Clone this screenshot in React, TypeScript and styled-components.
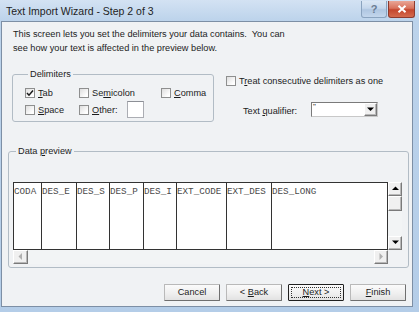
import React from "react";
import styled, { createGlobalStyle, css } from "styled-components";

const GlobalStyle = createGlobalStyle`
  html, body { margin: 0; padding: 0; background: #ffffff; }
  body { font-family: "Liberation Sans", Arial, sans-serif; }
  * { box-sizing: border-box; }
`;

const Window = styled.div`
  width: 419px;
  height: 312px;
  display: flex;
  flex-direction: column;
  background: linear-gradient(#d3e2f3, #bcd3eb 21px, #b4cde8 100%);
  overflow: hidden;
`;

const TitleBar = styled.div`
  height: 21px;
  flex: none;
  display: flex;
  align-items: flex-start;
  padding: 0 4px 0 6px;
`;

const TitleText = styled.div`
  font-size: 10.5px;
  line-height: 21px;
  padding-top: 1px;
  color: #1e1e1e;
  white-space: nowrap;
`;

const Controls = styled.div`
  margin-left: auto;
  display: flex;
  gap: 1px;
  padding-top: 1px;
`;

const CaptionButton = styled.div<{ $close?: boolean }>`
  width: ${(p) => (p.$close ? 27 : 26)}px;
  height: 17px;
  display: flex;
  align-items: center;
  justify-content: center;
  border: 1px solid ${(p) => (p.$close ? "#8d3a2e" : "#8aa3bf")};
  border-top: none;
  border-radius: 0 0 3px 3px;
  background: ${(p) =>
    p.$close
      ? "linear-gradient(#e9a696, #d9735d 45%, #c4462d 55%, #d46a4e)"
      : "linear-gradient(#dbe7f4, #c5d7ec 45%, #afc6e1 55%, #c3d6ec)"};
  font-size: 11px;
  font-weight: bold;
  color: ${(p) => (p.$close ? "#ffffff" : "#6a7c92")};
`;

const Client = styled.div`
  flex: 1;
  margin: 0 6px 5px 1px;
  border: 1px solid #7d8fa5;
  background: #f0f2f4;
  display: flex;
  flex-direction: column;
  color: #1c1c1c;
  font-size: 9.2px;
`;

const Description = styled.p`
  margin: 6px 0 0 11px;
  font-size: 9.2px;
  line-height: 13.5px;
`;

const OptionsRow = styled.div`
  display: flex;
  margin-top: 14px;
  padding-left: 10px;
`;

const Group = styled.fieldset<{ $width: number }>`
  width: ${(p) => p.$width}px;
  margin: 0;
  border: 1px solid #b2bcc5;
  border-radius: 3px;
  min-width: 0;
`;

const DelimGroup = styled(Group)`
  padding: 0 0 3px 12px;
`;

const PreviewGroup = styled(Group)`
  margin: 24px 0 0 6px;
  padding: 0 0 3px 4px;
`;

const Legend = styled.legend`
  font-size: 9.2px;
  line-height: 11px;
  padding: 0 2px;
  margin-left: 3px;
`;

const DelimGrid = styled.div`
  display: grid;
  grid-template-columns: 54px 82px auto;
  grid-template-rows: 17px 17px;
  margin-top: 4px;
`;

const CheckItem = styled.label`
  display: flex;
  align-items: center;
  gap: 3px;
  font-size: 9.2px;
  white-space: nowrap;
`;

const Box = styled.span`
  width: 10px;
  height: 10px;
  flex: none;
  border: 1px solid #8e8f8f;
  background: linear-gradient(135deg, #dedede, #ffffff 80%);
  display: flex;
  align-items: center;
  justify-content: center;
`;

const U = styled.span`
  text-decoration: underline;
`;

const OtherBox = styled.span`
  width: 17px;
  height: 17px;
  margin-left: 6px;
  background: #ffffff;
  border: 1px solid #abadb3;
  border-top-color: #8c8f96;
`;

const RightColumn = styled.div`
  margin-left: 12px;
  padding-top: 6.5px;
  display: flex;
  flex-direction: column;
`;

const QualifierRow = styled.div`
  display: flex;
  align-items: center;
  margin-top: 16px;
  padding-left: 17px;
`;

const QualifierLabel = styled.span`
  width: 68px;
  padding-top: 3px;
  font-size: 9.2px;
`;

const Select = styled.div`
  width: 67px;
  height: 15px;
  display: flex;
  background: #ffffff;
  border: 1px solid #7a7a7a;
  border-right-color: #c8c8c8;
  border-bottom-color: #c8c8c8;
`;

const SelectValue = styled.span`
  flex: 1;
  font-size: 8px;
  line-height: 8px;
  padding-left: 1px;
`;

const ArrowButton = styled.span<{ $disabled?: boolean; $w?: number; $h?: number }>`
  width: ${(p) => p.$w ?? 13}px;
  height: ${(p) => p.$h ?? 13}px;
  flex: none;
  display: flex;
  align-items: center;
  justify-content: center;
  background: #f0f0f0;
  border: 1px solid #ffffff;
  border-right-color: #7a7a7a;
  border-bottom-color: #7a7a7a;
  box-shadow: inset -1px -1px 0 #b8b8b8;
  color: ${(p) => (p.$disabled ? "#b0b0b0" : "#000000")};
`;

const Preview = styled.div`
  display: grid;
  grid-template-columns: 375px 14px;
  grid-template-rows: 68px 14px;
  margin-top: 24.5px;
`;

const Table = styled.div`
  display: flex;
  background: #ffffff;
  border: 1px solid #333333;
  overflow: hidden;
`;

const Cell = styled.div<{ $last?: boolean }>`
  flex: ${(p) => (p.$last ? "1" : "none")};
  height: 100%;
  padding-top: 3px;
  border-right: ${(p) => (p.$last ? "none" : "1px solid #333333")};
  font-family: "Liberation Mono", "Courier New", monospace;
  font-size: 9.25px;
  line-height: 11px;
  color: #4a4a4a;
  white-space: pre;
  overflow: hidden;
`;

const VScroll = styled.div`
  display: flex;
  flex-direction: column;
`;

const Thumb = styled.span`
  height: 15px;
  background: #f0f0f0;
  border: 1px solid #ffffff;
  border-right-color: #7a7a7a;
  border-bottom-color: #7a7a7a;
  box-shadow: inset -1px -1px 0 #b8b8b8;
`;

const Track = styled.span`
  flex: 1;
  background: #f2f4f5;
`;

const HScroll = styled.div`
  display: flex;
`;

const ButtonRow = styled.div`
  display: flex;
  justify-content: flex-end;
  gap: 6px;
  margin-top: 16px;
  padding-right: 6px;
`;

const Button = styled.button<{ $default?: boolean }>`
  width: 56px;
  height: 17px;
  padding: 0;
  font-family: "Liberation Sans", Arial, sans-serif;
  font-size: 9.2px;
  color: #1c1c1c;
  background: linear-gradient(#fbfbfb, #eeeeee 60%, #e2e2e2);
  border: 1px solid #b9b9b9;
  border-right-color: #6f6f6f;
  border-bottom-color: #6f6f6f;
  border-radius: 1px;
  ${(p) =>
    p.$default &&
    css`
      border: 1px solid #1f1f1f;
      outline: 1px dotted #333333;
      outline-offset: -4px;
    `}
`;

const Tri = ({ dir, color }: { dir: "up" | "down" | "left" | "right"; color?: string }) => {
  const pts = {
    up: "0,4 7,4 3.5,0.5",
    down: "0,0.5 7,0.5 3.5,4",
    left: "4,0 4,7 0.5,3.5",
    right: "0.5,0 0.5,7 4,3.5",
  }[dir];
  const vertical = dir === "up" || dir === "down";
  return (
    <svg width={vertical ? 7 : 5} height={vertical ? 5 : 7} viewBox={vertical ? "0 0 7 5" : "0 0 5 7"}>
      <polygon points={pts} fill={color ?? "currentColor"} />
    </svg>
  );
};

const Check = () => (
  <svg width="8" height="8" viewBox="0 0 8 8">
    <polyline points="1,4 3,6.2 7,1.5" fill="none" stroke="#1a1a1a" strokeWidth="1.5" />
  </svg>
);

const CheckBox = ({ checked, children }: { checked?: boolean; children: React.ReactNode }) => (
  <CheckItem>
    <Box>{checked && <Check />}</Box>
    <span>{children}</span>
  </CheckItem>
);

const columns = [
  { name: "CODA", width: 28 },
  { name: "DES_E", width: 35 },
  { name: "DES_S", width: 33 },
  { name: "DES_P", width: 34 },
  { name: "DES_I", width: 33 },
  { name: "EXT_CODE", width: 50 },
  { name: "EXT_DES", width: 45 },
  { name: "DES_LONG", width: 0 },
];

export default function App() {
  return (
    <>
      <GlobalStyle />
      <Window>
        <TitleBar>
          <TitleText>Text Import Wizard - Step 2 of 3</TitleText>
          <Controls>
            <CaptionButton>?</CaptionButton>
            <CaptionButton $close>
              <svg width="10" height="8" viewBox="0 0 10 8">
                <path d="M1.5 0.8 L8.5 7.2 M8.5 0.8 L1.5 7.2" stroke="#ffffff" strokeWidth="2" />
              </svg>
            </CaptionButton>
          </Controls>
        </TitleBar>
        <Client>
          <Description>
            This screen lets you set the delimiters your data contains.{"\u00a0"} You can
            <br />
            see how your text is affected in the preview below.
          </Description>
          <OptionsRow>
            <DelimGroup $width={202}>
              <Legend>Delimiters</Legend>
              <DelimGrid>
                <CheckBox checked>
                  <U>T</U>ab
                </CheckBox>
                <CheckBox>
                  Se<U>m</U>icolon
                </CheckBox>
                <CheckBox>
                  <U>C</U>omma
                </CheckBox>
                <CheckBox>
                  <U>S</U>pace
                </CheckBox>
                <CheckItem>
                  <Box />
                  <span>
                    <U>O</U>ther:
                  </span>
                  <OtherBox />
                </CheckItem>
              </DelimGrid>
            </DelimGroup>
            <RightColumn>
              <CheckBox>
                T<U>r</U>eat consecutive delimiters as one
              </CheckBox>
              <QualifierRow>
                <QualifierLabel>
                  Text <U>q</U>ualifier:
                </QualifierLabel>
                <Select>
                  <SelectValue>"</SelectValue>
                  <ArrowButton>
                    <Tri dir="down" />
                  </ArrowButton>
                </Select>
              </QualifierRow>
            </RightColumn>
          </OptionsRow>
          <PreviewGroup $width={401}>
            <Legend>
              Data <U>p</U>review
            </Legend>
            <Preview>
              <Table>
                {columns.map((c, i) => (
                  <Cell
                    key={c.name}
                    $last={i === columns.length - 1}
                    style={c.width ? { width: c.width } : undefined}
                  >
                    {c.name}
                  </Cell>
                ))}
              </Table>
              <VScroll>
                <ArrowButton $w={14} $h={14}>
                  <Tri dir="up" />
                </ArrowButton>
                <Thumb />
                <Track />
                <ArrowButton $w={14} $h={14}>
                  <Tri dir="down" />
                </ArrowButton>
              </VScroll>
              <HScroll>
                <ArrowButton $w={15} $h={14} $disabled>
                  <Tri dir="left" />
                </ArrowButton>
                <Track />
                <ArrowButton $w={14} $h={14} $disabled>
                  <Tri dir="right" />
                </ArrowButton>
              </HScroll>
            </Preview>
          </PreviewGroup>
          <ButtonRow>
            <Button>Cancel</Button>
            <Button>
              &lt; <U>B</U>ack
            </Button>
            <Button $default>
              <U>N</U>ext &gt;
            </Button>
            <Button>
              <U>F</U>inish
            </Button>
          </ButtonRow>
        </Client>
      </Window>
    </>
  );
}
